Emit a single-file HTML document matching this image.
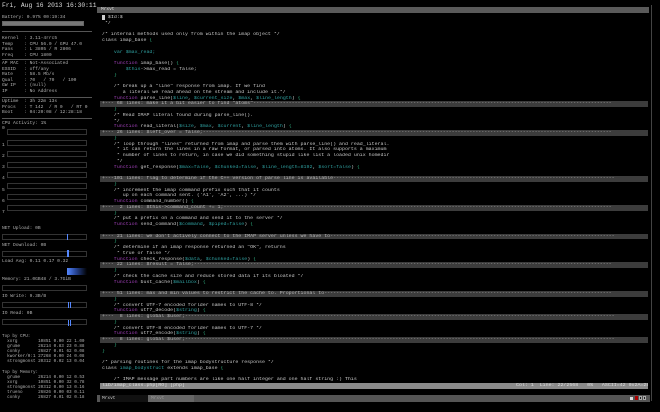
<!DOCTYPE html>
<html><head><meta charset="utf-8"><style>
*{margin:0;padding:0;box-sizing:border-box}
body{width:660px;height:412px;background:#000;overflow:hidden;position:relative;font-family:"Liberation Mono",monospace;color:#c8c8c8}
.a{position:absolute;white-space:pre}
#code{position:absolute;left:100px;top:15px;width:548px;font-size:4.95px;line-height:5.75px}
#code div{height:5.75px;white-space:pre;padding-left:2px;overflow:hidden}
.f{background:#3c3c3c;color:#b8b8b8}
.k{color:#a040b8}.v{color:#2fa0a0}.b{color:#2fb080}
.l{font-size:4.6px;line-height:5.6px;color:#b0b0b0}
.hr{position:absolute;left:2px;width:90px;height:1px;background:#555}
.box{position:absolute;left:7px;width:80px;height:6px;border:1px solid #333}
</style></head><body>
<div class="a" style="left:2px;top:2px;font-size:6.3px;color:#ddd">Fri, Aug 16 2013 16:30:11</div>
<div class="a l" style="left:2px;top:15px">Battery: 0.97% 00:19:34</div>
<div style="position:absolute;left:2px;top:21px;width:82px;height:5px;border:1px solid #666;background:#777"></div>
<div class="hr" style="top:31px"></div>
<div class="a l" style="left:2px;top:36px">Kernel  : 3.11-4rrc5
Temp    : CPU 56.0 / GPU 47.0
Fans    : L 3805 / R 2806
Freq    : CPU 1800</div>
<div class="hr" style="top:59px"></div>
<div class="a l" style="left:2px;top:61px">AP MAC  : Not-Associated
ESSID   : off/any
Rate    : 58.5 Mb/s
Qual    : 70   / 70   / 100
GW IP   : (null)
IP      : No Address</div>
<div class="hr" style="top:97px"></div>
<div class="a l" style="left:2px;top:99px">Uptime  : 3h 22m 13s
Procs   : T 142  / R 0   / RT 0
Boot    : 04:20:08 / 12:28:18</div>
<div class="hr" style="top:118px"></div>
<div class="a l" style="left:2px;top:121px">CPU Activity: 1%</div>
<div class="a l" style="left:2px;top:126px">0


1

2

3

4

5

6

7</div>
<div class="box" style="top:129px"></div><div class="box" style="top:140px"></div><div class="box" style="top:151px"></div><div class="box" style="top:162px"></div><div class="box" style="top:172px"></div><div class="box" style="top:183px"></div><div class="box" style="top:194px"></div><div class="box" style="top:205px"></div>
<div class="a l" style="left:2px;top:226px">NET Upload: 0B</div>
<div class="box" style="left:2px;width:85px;top:234px"></div>
<div style="position:absolute;left:67px;top:234px;width:1px;height:6px;background:#58f"></div>
<div class="a l" style="left:2px;top:243px">NET Download: 0B</div>
<div class="box" style="left:2px;width:85px;top:251px"></div>
<div style="position:absolute;left:67px;top:250px;width:2px;height:7px;background:#58f"></div>
<div class="a l" style="left:2px;top:259px">Load Avg: 0.11 0.17 0.32</div>
<div style="position:absolute;left:67px;top:268px;width:20px;height:7px;background:linear-gradient(90deg,#58f,#2a4aa0 40%,#000)"></div>
<div class="a l" style="left:2px;top:277px">Memory: 21.0GB48 / 3.7GiB</div>
<div class="box" style="left:2px;width:85px;top:285px"></div>
<div class="a l" style="left:2px;top:294px">IO Write: 9.3B/B</div>
<div class="box" style="left:2px;width:85px;top:302px"></div>
<div style="position:absolute;left:68px;top:302px;width:3px;height:6px;border-left:1px solid #58f;border-right:1px solid #58f"></div>
<div class="a l" style="left:2px;top:311px">IO Read: 0B</div>
<div class="box" style="left:2px;width:85px;top:319px"></div>
<div style="position:absolute;left:68px;top:320px;width:3px;height:6px;border-left:1px solid #58f;border-right:1px solid #58f"></div>
<div class="a l" style="left:2px;top:334px;line-height:5.1px;font-size:4.3px">Top by CPU:
  xorg        10851 0.00 22 1.00
  grume       26214 0.83 23 0.88
  conky       26827 0.01 62 0.08
  kworker/0:1 27268 0.00 24 0.08
  strongmonst 20312 0.02 13 0.04

Top by Memory:
  grume       26214 0.00 12 0.53
  xorg        10851 0.00 32 0.78
  strongmonst 20312 0.00 13 0.16
  trueno      26826 0.00 03 0.11
  conky       26827 0.01 02 0.18</div>

<div style="position:absolute;left:97px;top:7px;width:552px;height:6px;background:#5a5a5a"></div>
<div class="a" style="left:101px;top:7px;font-size:4.5px;line-height:6px;color:#ddd">Mrxvt</div>
<div style="position:absolute;left:651px;top:5px;width:1px;height:396px;background:#444"></div>
<div id="code">
<div><span style="background:#ccc"> </span> $Id:$</div>
<div> */</div>
<div></div>
<div>/* internal methods used only from within the imap object */</div>
<div>class imap_base <span class="b">{</span></div>
<div></div>
<div>    <span class="v">var $max_read;</span></div>
<div></div>
<div>    <span class="k">function</span> imap_base() <span class="b">{</span></div>
<div>        <span class="v">$this</span>-&gt;max_read = false;</div>
<div>    <span class="b">}</span></div>
<div></div>
<div>    /* break up a "line" response from imap. If we find</div>
<div>       a literal we read ahead on the stream and include it.*/</div>
<div>    <span class="k">function</span> parse_line(<span class="v">$line</span>, <span class="v">$current_size</span>, <span class="v">$max</span>, <span class="v">$line_length</span>) <span class="b">{</span></div>
<div class="f">+--- 68 lines: make it a bit easier to find "atoms"-------------------------------------------------------------------------------------------------------------------------</div>
<div>    <span class="b">}</span></div>
<div>    /* Read IMAP literal found during parse_line().</div>
<div>    */</div>
<div>    <span class="k">function</span> read_literal(<span class="v">$size</span>, <span class="v">$max</span>, <span class="v">$current</span>, <span class="v">$line_length</span>) <span class="b">{</span></div>
<div class="f">+--- 26 lines: $left_over = false;------------------------------------------------------------------------------------------------------------------------------------------</div>
<div>    <span class="b">}</span></div>
<div>    /* loop through "lines" returned from imap and parse them with parse_line() and read_literal.</div>
<div>     * it can return the lines in a raw format, or parsed into atoms. It also supports a maximum</div>
<div>     * number of lines to return, in case we did something stupid like list a loaded unix homedir</div>
<div>     */</div>
<div>    <span class="k">function</span> get_response(<span class="v">$max=false</span>, <span class="v">$chunked=false</span>, <span class="v">$line_length=8192</span>, <span class="v">$sort=false</span>) <span class="b">{</span></div>
<div></div>
<div class="f">+---101 lines: flag to determine if the C++ version of parse line is available-----------------------------------------------------------------------------------------------</div>
<div>    <span class="b">}</span></div>
<div>    /* increment the imap command prefix such that it counts</div>
<div>       up on each command sent. ('A1', 'A2', ...) */</div>
<div>    <span class="k">function</span> command_number() <span class="b">{</span></div>
<div class="f">+---  2 lines: $this-&gt;command_count += 1;-----------------------------------------------------------------------------------------------------------------------------------</div>
<div>    <span class="b">}</span></div>
<div>    /* put a prefix on a command and send it to the server */</div>
<div>    <span class="k">function</span> send_command(<span class="v">$command</span>, <span class="v">$piped=false</span>) <span class="b">{</span></div>
<div></div>
<div class="f">+--- 21 lines: we don't actively connect to the IMAP server unless we have to------------------------------------------------------------------------------------------------</div>
<div>    <span class="b">}</span></div>
<div>    /* determine if an imap response returned an "OK", returns</div>
<div>     * true or false */</div>
<div>    <span class="k">function</span> check_response(<span class="v">$data</span>, <span class="v">$chunked=false</span>) <span class="b">{</span></div>
<div class="f">+--- 22 lines: $result = false;---------------------------------------------------------------------------------------------------------------------------------------------</div>
<div>    <span class="b">}</span></div>
<div>    /* check the cache size and reduce stored data if its bloated */</div>
<div>    <span class="k">function</span> bust_cache(<span class="v">$mailbox</span>) <span class="b">{</span></div>
<div></div>
<div class="f">+--- 51 lines: max and min values to restrict the cache to. Proportional to-------------------------------------------------------------------------------------------------</div>
<div>    <span class="b">}</span></div>
<div>    /* convert UTF-7 encoded forlder names to UTF-8 */</div>
<div>    <span class="k">function</span> utf7_decode(<span class="v">$string</span>) <span class="b">{</span></div>
<div class="f">+---  8 lines: global $user;-------------------------------------------------------------------------------------------------------------------------------------------------</div>
<div>    <span class="b">}</span></div>
<div>    /* convert UTF-8 encoded forlder names to UTF-7 */</div>
<div>    <span class="k">function</span> utf7_encode(<span class="v">$string</span>) <span class="b">{</span></div>
<div class="f">+---  8 lines: global $user;-------------------------------------------------------------------------------------------------------------------------------------------------</div>
<div>    <span class="b">}</span></div>
<div><span class="b">}</span></div>
<div></div>
<div>/* parsing routines for the imap bodystructure response */</div>
<div>class <span class="v">imap_bodystruct</span> extends imap_base <span class="b">{</span></div>
<div></div>
<div>    /* IMAP message part numbers are like one half integer and one half string :) This</div>
<div style="background:#8a8a8a;color:#ddd;position:relative">lib/imap_class.php[RO] [php]<span style="position:absolute;left:416px">Col: 1  Line: 22/2568   0%   ASCII=42 0x2A=28</span></div>
</div>
<div style="position:absolute;left:97px;top:395px;width:553px;height:7px;background:#555"></div>
<div class="a" style="left:100px;top:395px;width:48px;height:7px;background:#111;color:#ccc;font-size:4.5px;line-height:7px;padding-left:2px">Mrxvt</div>
<div class="a" style="left:148px;top:395px;width:46px;height:7px;background:#666;color:#999;font-size:4.5px;line-height:7px;padding-left:3px">Mrxvt</div>
<div style="position:absolute;left:630px;top:397px;width:3px;height:3px;background:#ddd"></div>
<div style="position:absolute;left:635px;top:396px;width:3px;height:4px;background:#a00"></div>
<div style="position:absolute;left:639px;top:396px;width:3px;height:4px;background:#222;border:1px solid #aaa"></div>
<div style="position:absolute;left:643px;top:396px;width:3px;height:4px;background:#222;border:1px solid #aaa"></div>
</body></html>
